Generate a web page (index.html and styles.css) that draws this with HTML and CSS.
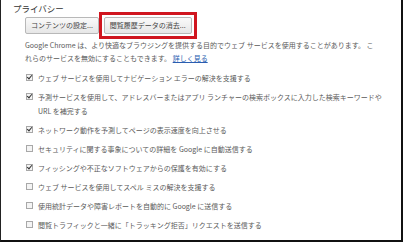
FILE: index.html
```html
<!doctype html>
<html lang="ja">
  <head>
    <meta charset="utf-8">
    <title>プライバシー</title>
    <link rel="stylesheet" href="styles.css">
  </head>
  <body>
    <div class="frame">
      <h2 class="title">プライバシー</h2>
      <div class="section">
        <div class="buttons">
          <button type="button" class="btn">コンテンツの設定...</button>
          <span class="highlight">
            <button type="button" class="btn">閲覧履歴データの消去...</button>
          </span>
        </div>
        <p class="note">Google Chrome は、より快適なブラウジングを提供する目的でウェブ サービスを使用することがあります。 こ<br>れらのサービスを無効にすることもできます。 <a href="#">詳しく見る</a></p>
        <ul class="options">
          <li><span class="box checked"></span><span>ウェブ サービスを使用してナビゲーション エラーの解決を支援する</span></li>
          <li><span class="box checked"></span><span>予測サービスを使用して、アドレスバーまたはアプリ ランチャーの検索ボックスに入力した検索キーワードや<br>URL を補完する</span></li>
          <li><span class="box checked"></span><span>ネットワーク動作を予測してページの表示速度を向上させる</span></li>
          <li><span class="box"></span><span>セキュリティに関する事象についての詳細を Google に自動送信する</span></li>
          <li><span class="box checked"></span><span>フィッシングや不正なソフトウェアからの保護を有効にする</span></li>
          <li><span class="box"></span><span>ウェブ サービスを使用してスペル ミスの解決を支援する</span></li>
          <li><span class="box"></span><span>使用統計データや障害レポートを自動的に Google に送信する</span></li>
          <li><span class="box"></span><span>閲覧トラフィックと一緒に「トラッキング拒否」リクエストを送信する</span></li>
        </ul>
      </div>
    </div>
  </body>
</html>
```

FILE: styles.css
```css
html, body {
  margin: 0;
  background: #fff;
}
body {
  font-family: "Noto Sans CJK JP", "Noto Sans", sans-serif;
  color: #5a5a5a;
}
.frame {
  box-sizing: border-box;
  width: 403px;
  height: 242px;
  border-left: 1px solid #222;
  border-right: 2px solid #111;
  border-bottom: 2px solid #111;
  padding: 3px 0 0 12px;
}
.title {
  margin: 0;
  font-size: 8.5px;
  line-height: 10px;
  font-weight: normal;
  color: #333;
}
.section {
  padding-left: 12px;
}
.buttons {
  display: flex;
  align-items: center;
  margin-top: -1px;
}
.btn {
  font-family: inherit;
  font-size: 7px;
  line-height: 9px;
  color: #444;
  height: 17px;
  padding: 0 5px;
  border: 1px solid #b8b8b8;
  border-radius: 2px;
  background: linear-gradient(#fafafa, #e6e6e6);
  margin: 0;
}
.highlight {
  display: inline-flex;
  border: 3px solid #d0161f;
  padding: 2px 2px;
}
.note {
  margin: 0;
  font-size: 7px;
  line-height: 13px;
  margin-top: 0;
}
.note a {
  color: #2a5db0;
}
.options {
  list-style: none;
  margin: 6px 0 0;
  padding: 0;
}
.options li {
  display: flex;
  align-items: flex-start;
  font-size: 7px;
  line-height: 14px;
  margin-bottom: 5px;
}
.box {
  flex: none;
  box-sizing: border-box;
  width: 7px;
  height: 7px;
  margin: 3px 5px 0 1px;
  border: 1px solid #a8a8a8;
  background: #f4f4f4;
  position: relative;
}
.box.checked::after {
  content: "";
  position: absolute;
  left: 1px;
  top: -1px;
  width: 2px;
  height: 4px;
  border: solid #333;
  border-width: 0 1.5px 1.5px 0;
  transform: rotate(40deg);
}
```
